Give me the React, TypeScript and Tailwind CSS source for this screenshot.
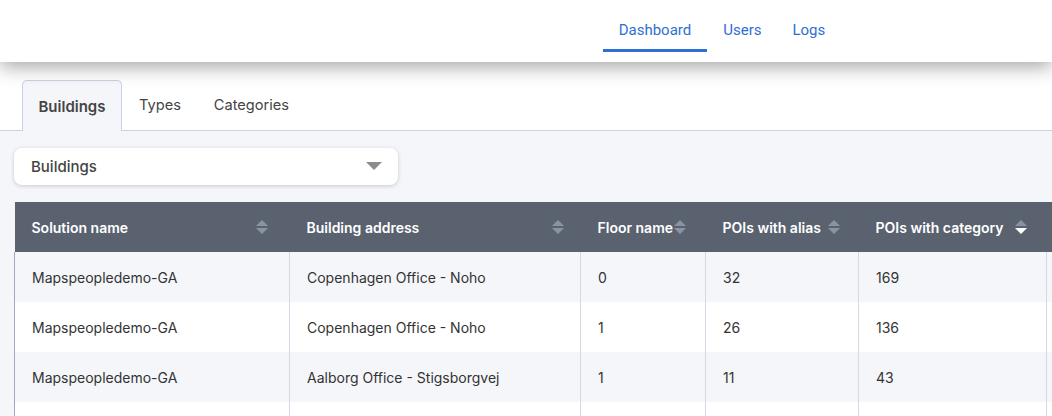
import React from "react";

const rows = [
  ["Mapspeopledemo-GA", "Copenhagen Office - Noho", "0", "32", "169"],
  ["Mapspeopledemo-GA", "Copenhagen Office - Noho", "1", "26", "136"],
  ["Mapspeopledemo-GA", "Aalborg Office - Stigsborgvej", "1", "11", "43"],
  ["", "", "", "", ""],
];

const SortIcon = ({ active = false }: { active?: boolean }) => (
  <svg width="14" height="16" viewBox="0 0 14 16" className="shrink-0">
    <path d="M1 7 L7 1 L13 7 Z" fill="#8a93a1" />
    <path d="M1 9 L13 9 L7 15 Z" fill={active ? "#ffffff" : "#8a93a1"} />
  </svg>
);

const cols = [
  { label: "Solution name", w: "w-[275px]", gap: "justify-between pr-[21px]" },
  { label: "Building address", w: "w-[291px]", gap: "justify-between pr-[16px]" },
  { label: "Floor name", w: "w-[125px]", gap: "gap-0 pr-2" },
  { label: "POIs with alias", w: "w-[153px]", gap: "gap-[6px] pr-2" },
  { label: "POIs with category", w: "w-[188px]", gap: "gap-[10px] pr-2", active: true },
];

export default function App() {
  return (
    <div className="w-[1052px] h-[416px] overflow-hidden bg-[#f5f6fa] font-['Inter',sans-serif] text-[#333]">
      <header className="relative z-10 h-[62px] bg-white shadow-[0_4px_20px_rgba(0,0,0,0.38)] flex justify-center font-['Roboto',sans-serif]">
        <nav className="flex items-stretch gap-4 ml-[376px]">
          <a className="relative flex items-center px-4 pb-[2px] text-[15px] text-[#2f6fd4]">
            Dashboard
            <span className="absolute left-0 right-0 bottom-[10px] h-[3px] bg-[#2f6fd4]" />
          </a>
          <a className="flex items-center pb-[2px] text-[15px] text-[#2f6fd4]">Users</a>
          <a className="flex items-center pl-[15px] pb-[2px] text-[15px] text-[#2f6fd4]">Logs</a>
        </nav>
      </header>

      <div className="h-[69px] bg-white border-b border-[#c9d1e2] flex items-end pl-[22px]">
        <button className="h-[51px] w-[100px] -mb-px pt-[2px] bg-[#f5f6fa] border border-b-0 border-[#c9d1e2] rounded-t-[5px] text-[15px] font-semibold text-[#444]">
          Buildings
        </button>
        <button className="h-[50px] pt-[2px] px-[17px] text-[14.6px] text-[#444]">Types</button>
        <button className="h-[50px] pt-[2px] px-[16px] text-[14.6px] text-[#444]">Categories</button>
      </div>

      <div className="px-[14px] pt-[17px]">
        <div className="w-[384px] h-[37px] bg-white rounded-[8px] shadow-[0_1px_4px_rgba(0,0,0,0.18)] flex items-center justify-between pl-[17px] pr-[16px]">
          <span className="pt-[2px] text-[15px] font-medium text-[#444]">Buildings</span>
          <svg width="16" height="9" viewBox="0 0 16 9">
            <path d="M0 0 L16 0 L8 8 Z" fill="#8c8c8c" />
          </svg>
        </div>

        <div className="mt-[17px] w-[1038px] overflow-hidden">
          <table className="border-collapse table-fixed w-[1200px] text-[14px]">
            <thead>
              <tr className="bg-[#5a6270] h-[50px]">
                {cols.map((c) => (
                  <th key={c.label} className={`${c.w} p-0 text-left font-semibold text-white`}>
                    <div className={`flex items-center pl-[17px] ${c.gap}`}>
                      <span>{c.label}</span>
                      <SortIcon active={c.active} />
                    </div>
                  </th>
                ))}
                <th className="p-0" />
              </tr>
            </thead>
            <tbody>
              {rows.map((r, i) => (
                <tr key={i} className={`h-[50px] ${i % 2 === 0 ? "bg-[#f5f6fa]" : "bg-white"}`}>
                  {r.map((v, j) => (
                    <td
                      key={j}
                      className={`pl-[17px] text-[#333] ${j === 0 ? "border-l border-[#9eaac2]" : "border-l border-[#d3d9e6]"}`}
                    >
                      {v}
                    </td>
                  ))}
                  <td className="border-l border-[#d3d9e6]" />
                </tr>
              ))}
            </tbody>
          </table>
        </div>
      </div>
    </div>
  );
}
